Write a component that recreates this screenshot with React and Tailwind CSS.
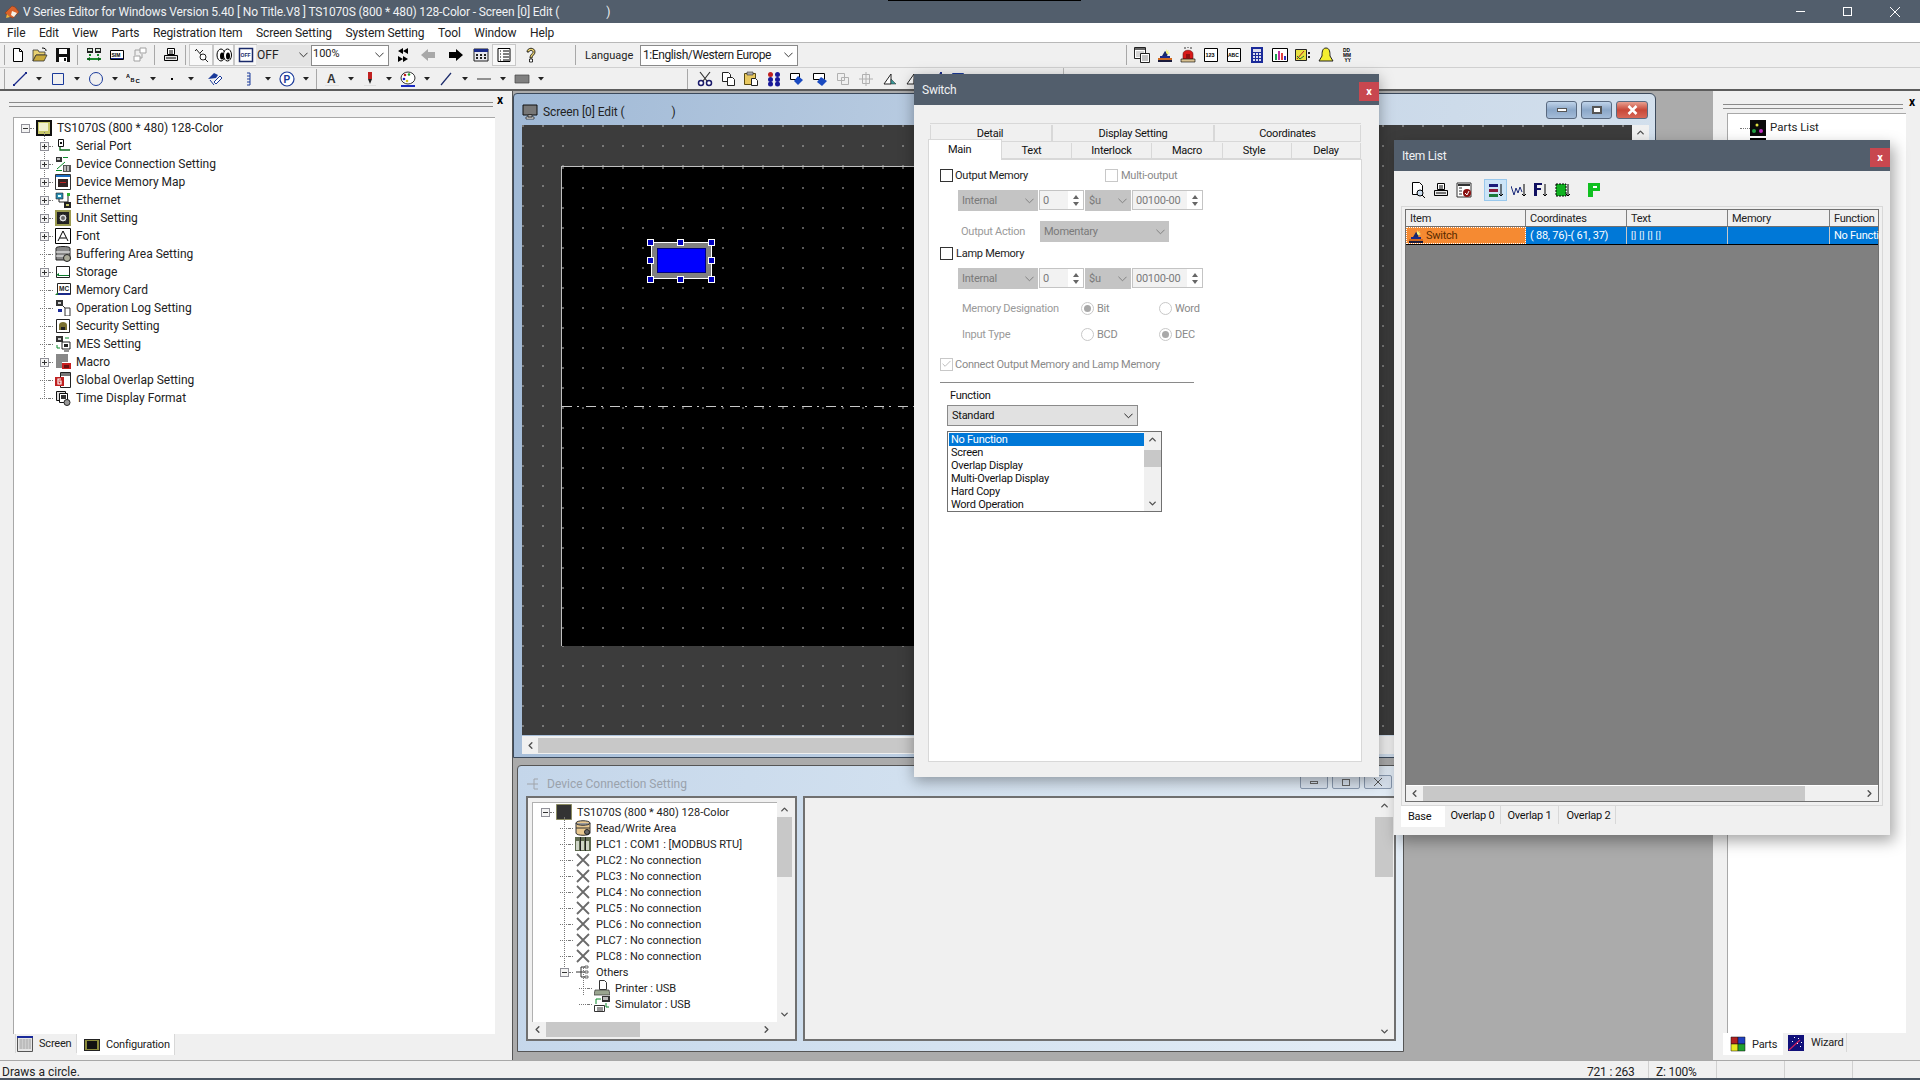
import React from 'react';
import { ChevronUp, ChevronDown, ChevronLeft, ChevronRight, Check } from 'lucide-react';

const S = ({ children }) => <svg viewBox="0 0 16 16" className="w-4 h-4 shrink-0">{children}</svg>;
const T = ({ x, y, s = 5, f = '#000', c }) => <text x={x} y={y} fontSize={s} fill={f} fontFamily="Liberation Sans" fontWeight="700">{c}</text>;

const I = {
  app: <S><path d="M1 9 8 2l3 1 4 5-6 6-3-1z" fill="#d9622b" stroke="#8a3a1a" strokeWidth=".6"/><path d="M8 7l5 2-3 4-3-2z" fill="#f3f0e6"/><path d="M3 10l3 3-4 1z" fill="#f0b23a"/></S>,
  new: <S><path d="M3.500 1.500h6l3 3v10h-9z" fill="#fff" stroke="#000"/><path d="M9.500 1.500v3h3" fill="none" stroke="#000"/></S>,
  open: <S><path d="M1 3h5l1 2h6v3H4l-3 6z" fill="#e8d070" stroke="#333" strokeWidth=".8"/><path d="M4 8h11l-3 6H1z" fill="#c9a93a" stroke="#333" strokeWidth=".8"/><path d="M10 1c3 0 4 1 4 3" stroke="#000" fill="none"/></S>,
  save: <S><path d="M1 1h14v14H1z" fill="#111"/><path d="M4 2h8v5H4z" fill="#fff"/><path d="M4 10h8v5H4z" fill="#fff"/><path d="M9 11h2v3H9z" fill="#111"/></S>,
  net: <S><path d="M1 1h6v5H1zM9 1h6v5H9z" fill="#222"/><path d="M2 2h4v2H2zM10 2h4v2h-4z" fill="#d8e8d8"/><path d="M3 7h2v2H3zM11 7h2v2h-2z" fill="#1a8a2a"/><path d="M1 11h14v2H1z" fill="#1a8a2a"/><path d="M1 12l3-2v4zM15 12l-3-2v4z" fill="#0a5a1a"/></S>,
  sim: <S><path d="M1.500 3.500h13v9h-13z" fill="#fff" stroke="#000"/><path d="M2 11h12v1H2z" fill="#1a2a8a"/><T x={2.500} y={9.500} s={5} c="SIM"/></S>,
  netg: <S><path d="M8 1h6v5H8zM2 9h6v5H2z" fill="#fff" stroke="#a0a0a0"/><path d="M3 3v5M3 3h5M10 7v4h-2" stroke="#a0a0a0" fill="none"/></S>,
  print: <S><path d="M4.500 1.500h7v6h-7z" fill="#fff" stroke="#000"/><path d="M1.500 8.500h13v5h-13z" fill="#e8e8e8" stroke="#000"/><path d="M6 4h4M6 6h4M3 11h10" stroke="#000"/></S>,
  plug: <S><path d="M3 2l6 7M10 3l-3 3" stroke="#222" fill="none"/><circle cx="10" cy="10" r="3" fill="#fff" stroke="#222"/><path d="M2 4l2-2" stroke="#222"/><path d="M12 12l3 3" stroke="#222"/></S>,
  eyes: <S><ellipse cx="5" cy="8" rx="4" ry="6" fill="#fff" stroke="#000"/><ellipse cx="11.500" cy="8" rx="4" ry="6" fill="#fff" stroke="#000"/><ellipse cx="6" cy="9" rx="2" ry="3.500" fill="#000"/><ellipse cx="12" cy="9" rx="2" ry="3.500" fill="#000"/></S>,
  off: <S><path d="M1.500 1.500h13v13h-13z" fill="#fff" stroke="#1a2a6a" strokeWidth="1.500"/><T x={2.600} y={10} s={5} f="#1a2a6a" c="OFF"/></S>,
  bk: <S><path d="M9 1v6L4 4zM14 1v6L9 4z M4 9l5 3-5 3zM9 9l5 3-5 3z" fill="#000"/></S>,
  lg: <S><path d="M1 8l7-6v3h7v6H8v3z" fill="#a8a8a8"/></S>,
  rg: <S><path d="M15 8L8 2v3H1v6h7v3z" fill="#000"/></S>,
  cal: <S><path d="M1 2h14v12H1z" fill="#e8e8ee" stroke="#222"/><path d="M1 2h14v3H1z" fill="#1a2a8a"/><path d="M3 7h2v2H3zM7 7h2v2H7zM11 7h2v2h-2zM3 10h2v2H3zM7 10h2v2H7zM11 10h2v2h-2z" fill="#222"/></S>,
  list: <S><path d="M2 1.500h12v13H2z" fill="#fff" stroke="#000"/><path d="M4 4h1M7 4h6M4 7h1M7 7h6M4 10h1M7 10h6M4 13h1M7 13h6" stroke="#000"/></S>,
  help: <S><path d="M4 5c0-5 8-5 8 0 0 3-3 3-3 6H7c0-4 3-4 3-6 0-2-4-2-4 0z" fill="#e8d070" stroke="#000" strokeWidth=".8"/><path d="M6.500 12h3v3h-3z" fill="#fff" stroke="#000" strokeWidth=".8"/></S>,
  line: <S><path d="M2 14L14 2" stroke="#1a2a8a" strokeWidth="1.300"/><path d="M1 13h2v2H1zM13 1h2v2h-2z" fill="#1a2a8a"/></S>,
  rect: <S><path d="M2.500 2.500h11v11h-11z" fill="none" stroke="#1a3a9a"/></S>,
  circle: <S><circle cx="8" cy="8" r="6.500" fill="none" stroke="#1a3a9a"/></S>,
  abc: <S><T x={0} y={7} s={5.500} c="A"/><T x={4.500} y={11} s={5.500} c="B"/><T x={9.500} y={12} s={6} c="C"/></S>,
  dot: <S><path d="M7 7h2v2H7z" fill="#000"/></S>,
  tag: <S><path d="M1 8l6-6 4 2-2 3z" fill="#1a3a9a"/><path d="M7 11l6-6 2 2-6 6z" fill="#fff" stroke="#1a3a9a"/><path d="M3 9l4 5" stroke="#1a3a9a"/></S>,
  brk: <S><path d="M6 2h3v12H6M6 5h3M6 8h3M6 11h3" fill="none" stroke="#1a3a9a"/></S>,
  p: <S><circle cx="8" cy="8" r="7" fill="#fff" stroke="#1a3a9a" strokeWidth="1.200"/><T x={4.500} y={12} s={10} f="#1a3a9a" c="P"/></S>,
  a: <S><T x={3} y={12} s={12} f="#333" c="A"/><path d="M1 14h14v1H1z" fill="#e0e0e0"/></S>,
  pen: <S><path d="M6 1h4v7H6z" fill="#c02020"/><path d="M6 8h4l-2 5z" fill="#222"/><path d="M2 14h12v1H2z" fill="#e0e0e0"/></S>,
  pal: <S><ellipse cx="8" cy="7" rx="7" ry="6" fill="#fff" stroke="#333"/><circle cx="5" cy="4" r="1.300" fill="#c02020"/><circle cx="9" cy="3.500" r="1.300" fill="#20a020"/><circle cx="4" cy="8" r="1.300" fill="#2020c0"/><circle cx="7" cy="10" r="1.300" fill="#d0c020"/><path d="M1 14h14v2H1z" fill="#1a2ac0"/></S>,
  slash: <S><path d="M3 14L13 2" stroke="#1a2a6a" strokeWidth="1.200"/></S>,
  dash: <S><path d="M1 8h14" stroke="#333"/></S>,
  gbox: <S><path d="M1 4h14v8H1z" fill="#808080" stroke="#444" strokeWidth=".7"/></S>,
  cut: <S><circle cx="4" cy="12" r="2.500" fill="#fff" stroke="#1a1a6a" strokeWidth="1.500"/><circle cx="12" cy="12" r="2.500" fill="#fff" stroke="#1a1a6a" strokeWidth="1.500"/><path d="M3 1l7 9M13 1L6 10" stroke="#333" strokeWidth="1.200"/></S>,
  copy: <S><path d="M2.500 1.500h6l2 2v7h-8z" fill="#fff" stroke="#222"/><path d="M7.500 6.500h5l2 2v6h-7z" fill="#fff" stroke="#222"/></S>,
  paste: <S><path d="M1.500 2.500h11v11h-11z" fill="#e8c860" stroke="#5a4a10"/><path d="M4 1h6v3H4z" fill="#aaa" stroke="#333" strokeWidth=".6"/><path d="M8.500 7.500h4l2 2v5h-6z" fill="#fff" stroke="#222"/></S>,
  dots: <S><circle cx="4.500" cy="3.500" r="2.500" fill="#c02020"/><circle cx="11.500" cy="3.500" r="2.500" fill="#1a1a9a"/><circle cx="4.500" cy="8.500" r="2.500" fill="#1a1a9a"/><circle cx="11.500" cy="8.500" r="2.500" fill="#1a1a9a"/><circle cx="4.500" cy="13" r="2.500" fill="#1a1a9a"/><circle cx="11.500" cy="13" r="2.500" fill="#1a1a9a"/></S>,
  up: <S><path d="M1.500 2.500h9v6h-9z" fill="#fff" stroke="#000"/><path d="M9 5l5 4-5 5-4-4z" fill="#1a4ac0"/></S>,
  dn: <S><path d="M1.500 2.500h11v6h-11z" fill="#fff" stroke="#000"/><path d="M9 6l6 4-5 5-5-4z" fill="#1a4ac0"/></S>,
  g1: <S><path d="M2.500 2.500h7v7h-7zM6.500 6.500h7v7h-7z" fill="none" stroke="#b0b0b0"/></S>,
  g2: <S><path d="M4.500 3.500h7v9h-7zM1 8h14M8 1v14" fill="none" stroke="#b0b0b0"/></S>,
  tri1: <S><path d="M3 13L10 3v10z" fill="#fff" stroke="#222"/><path d="M10 8l5 5h-5z" fill="#3a9a9a" stroke="#222" strokeWidth=".5"/></S>,
  win: <S><path d="M.500 .500h11v11H.500z" fill="#fff" stroke="#222"/><path d="M1 1h10v2H1z" fill="#666"/><path d="M2 5h8M2 7h8M2 9h8" stroke="#aaa"/><path d="M6.500 6.500h9v9h-9z" fill="#fff" stroke="#222"/><path d="M8 9h6M8 11h6M8 13h6" stroke="#888"/></S>,
  bell: <S><path d="M8 1c-4 0-4 5-4 8l-3 5h14l-3-5c0-3 0-8-4-8z" fill="#f4ee30" stroke="#222"/></S>,
  switch: <S><path d="M5 9l3-5 3 3-1 2z" fill="#1a2a6a"/><path d="M9 2l1 2 2-1-1 2 2 1-2 1 0 1-2-2z" fill="#f0f080"/><path d="M3 9h10v2H3z" fill="#1a2a8a"/><path d="M1 11h14v2H1z" fill="#d06a20"/><path d="M1 13h14v2H1z" fill="#1a1a3a"/></S>,
  alarm: <S><path d="M3 7c0-5 10-5 10 0v5H3z" fill="#d81818" stroke="#622" strokeWidth=".6"/><path d="M6 7h4v4H6z" fill="#901010"/><path d="M1 12h14v3H1z" fill="#d8c090" stroke="#000" strokeWidth=".6"/><path d="M5 0v2M11 0v2M8 0v1" stroke="#333"/></S>,
  n123: <S><path d="M1.500 1.500h13v13h-13z" fill="#fff" stroke="#000"/><T x={2.500} y={10} s={5.500} c="123"/></S>,
  nabc: <S><path d="M1.500 1.500h13v13h-13z" fill="#fff" stroke="#000"/><T x={2} y={10} s={5} c="ABC"/></S>,
  calc: <S><path d="M2 0h12v16H2z" fill="#1a2a9a"/><path d="M4 2h8v3H4zM4 6h2v2H4zM7 6h2v2H7zM10 6h2v2h-2zM4 9h2v2H4zM7 9h2v2H7zM10 9h2v2h-2zM4 12h2v2H4zM7 12h2v2H7zM10 12h2v2h-2z" fill="#dde"/></S>,
  chart: <S><path d="M.500 1.500h15v13H.500z" fill="#fff" stroke="#000"/><path d="M3 7h2v6H3z" fill="#20a050"/><path d="M6 4h2v9H6z" fill="#c030a0"/><path d="M9 6h2v7H9z" fill="#e04040"/><path d="M12 9h2v4h-2z" fill="#3030c0"/></S>,
  meter: <S><path d="M.500 2.500h11v11H.500z" fill="#e8e040" stroke="#222"/><path d="M2 12l7-8" stroke="#b02020"/><path d="M2 9l3 3 4-3" stroke="#207030" fill="none"/><path d="M13 5h2v2h-2zM13 9h2v2h-2z" fill="#222"/></S>,
  dmy: <S><T x={2} y={4.800} s={4.800} c="DD"/><T x={2} y={10} s={4.800} c="MM"/><T x={3.500} y={15.200} s={4.800} c="YY"/></S>,
  root: <S><path d="M0 0h16v16H0z" fill="#111"/><path d="M2 2h12v12H2z" fill="#c8c86a"/><path d="M3 3h9v8H3z" fill="#f0f0d0"/></S>,
  serial: <S><path d="M3.500 1.500h5v7h-5z" fill="#fff" stroke="#111"/><path d="M5 4h2v2H5z" fill="#111"/><path d="M5 9v3h10" stroke="#0a6a1a" fill="none" strokeWidth="1.300"/></S>,
  dev: <S><path d="M1 1h6v5H1z" fill="#333"/><path d="M2 2h3v2H2z" fill="#bbb"/><path d="M2 13l8-7" stroke="#0a8a2a"/><path d="M8 1h5v1H8zM1 14h6v1H1z" fill="#0a8a2a"/><path d="M8 9h8v7H8z" fill="#555"/><path d="M9 10h2v5H9zM12 10h2v5h-2z" fill="#bbb"/></S>,
  map: <S><path d="M.500 .500h15v15H.500z" fill="#fff" stroke="#333"/><path d="M1 1h14v2H1z" fill="#1a6ac0"/><path d="M3 5h10v8H3z" fill="#322"/><path d="M5 8h6v1H5z" fill="#c02020"/></S>,
  eth: <S><path d="M1 1h7v6H1z" fill="#2a8ab0" stroke="#222" strokeWidth=".6"/><path d="M3 3h3v2H3z" fill="#dff"/><path d="M4 7v3h9V3" stroke="#222" fill="none"/><path d="M12 1h3v3h-3z" fill="#30b030"/><path d="M9 10h7v6H9z" fill="#222"/><path d="M11 12h3v2h-3z" fill="#c8c86a"/></S>,
  unit: <S><path d="M0 0h16v16H0z" fill="#9a9a50"/><path d="M2 2h12v12H2z" fill="#222"/><circle cx="8" cy="8" r="4" fill="#ddd" stroke="#222"/><circle cx="8" cy="8" r="2" fill="#666"/></S>,
  font: <S><path d="M.500 .500h15v15H.500z" fill="#fff" stroke="#000"/><path d="M3 13L8 3l5 10M5 10h6" fill="none" stroke="#000"/></S>,
  buf: <S><path d="M1 2c0-2 14-2 14 0v12H1z" fill="#888" stroke="#222"/><path d="M1 6h14M1 10h14" stroke="#fff"/><circle cx="12" cy="12" r="3.500" fill="#aa9" stroke="#222"/></S>,
  storage: <S><path d="M1.500 2.500h13v11h-13z" fill="#fff" stroke="#222"/><path d="M3 11h11v1H3z" fill="#0a7a2a"/><path d="M1 11l3-2v3z" fill="#0a7a2a"/></S>,
  mc: <S><path d="M2.500 1.500h13v11h-13z" fill="#fff" stroke="#222"/><T x={4} y={8.500} s={6.500} f="#222" c="MC"/><path d="M3 11h12v2H3z" fill="#1a2a8a"/><path d="M0 13l3-3v3z" fill="#1a7a2a"/></S>,
  oplog: <S><path d="M1 0h7v6H1z" fill="#333"/><path d="M3 2h3v2H3z" fill="#ccc"/><path d="M3 9h4v3H3z" fill="#1a2a9a"/><path d="M10 8h5v8h-5z" fill="#fff" stroke="#333"/><path d="M8 6l2 2" stroke="#333"/></S>,
  sec: <S><path d="M1.500 1.500h13v13h-13z" fill="#fff" stroke="#222"/><path d="M4 12V7c0-4 8-4 8 0v5z" fill="#7a7030"/><path d="M6 9h4v3H6z" fill="#222"/></S>,
  mes: <S><path d="M1 0h7v6H1z" fill="#333"/><path d="M3 2h3v2H3z" fill="#ccc"/><path d="M7 6h8v7H7z" fill="#fff" stroke="#222"/><path d="M9 8h4v3H9z" fill="#222"/><path d="M9 15h5" stroke="#222"/><path d="M2 9v3h3" stroke="#0a8a2a" fill="none"/><path d="M10 2h4" stroke="#0a8a2a"/></S>,
  macro: <S><path d="M1 1h12M1 3h12M1 5h12M1 7h12M1 9h6M1 11h6M1 13h6" stroke="#111"/><path d="M7 9h9v6H7z" fill="#c81f1f"/><path d="M9 11h5v3H9z" fill="#6a1010"/></S>,
  gov: <S><path d="M5.500 .500h10v15h-10z" fill="#fff" stroke="#222"/><path d="M6 1h9v3H6z" fill="#777"/><path d="M0 5h9v9H0z" fill="#c02020"/><path d="M6 7H3v5h3V9H4" fill="none" stroke="#fff" strokeWidth="1.200"/></S>,
  time: <S><path d="M1.500 1.500h9v9h-9z" fill="#ddd" stroke="#111"/><path d="M4.500 3.500h8v9h-8z" fill="#fff" stroke="#111"/><path d="M6 5h5v4H6z" fill="#333"/><circle cx="12" cy="12.500" r="3" fill="#999" stroke="#222"/></S>,
  rw: <S><path d="M1 3c0-3 14-3 14 0v10c0 3-14 3-14 0z" fill="#e8c890" stroke="#333"/><path d="M1 3c0 3 14 3 14 0" fill="#999" stroke="#333"/><path d="M1 8h14" stroke="#333"/><circle cx="12" cy="12" r="2.500" fill="#666" stroke="#222"/></S>,
  plc: <S><path d="M0 1h16v14H0z" fill="#5f6b50"/><path d="M1 5h3v9H1zM6 5h3v9H6zM11 5h3v9h-3z" fill="#d0d6c8"/><path d="M5 1h1v14H5zM10 1h1v14h-1z" fill="#222"/></S>,
  no: <S><path d="M2 2l12 12M14 2L2 14" stroke="#6a6a6a" strokeWidth="1.800"/></S>,
  oth: <S><path d="M1 8h5M6 8V3h4M6 8h4M6 8v5h4" stroke="#333" fill="none"/><path d="M10 2h3v2h-3zM10 7h3v2h-3zM10 12h3v2h-3z" fill="#fff" stroke="#333" strokeWidth=".7"/></S>,
  prn: <S><path d="M5.500 .500h5l2 2v7h-7z" fill="#fff" stroke="#333"/><path d="M1 10h14l1 5H0z" fill="#9aa590" stroke="#333" strokeWidth=".7"/></S>,
  simu: <S><path d="M8 0h8v6H8z" fill="#333"/><path d="M9 1h5v3H9z" fill="#bbb"/><path d="M.500 9.500h10v6H.500z" fill="#fff" stroke="#333"/><path d="M3 12h6M3 14h6" stroke="#333"/><path d="M2 8V3h5M12 7v4h3" stroke="#0a8a2a" fill="none"/></S>,
  mon: <S><path d="M1 1h14v10H1z" fill="#777" stroke="#111"/><path d="M6 11h4v2H6zM4 13h8v2H4z" fill="#fff" stroke="#111" strokeWidth=".7"/></S>,
  droot: <S><path d="M.500 .500h15v15H.500z" fill="#333" stroke="#8a8a60"/></S>,
  scr: <S><path d="M.500 .500h15v15H.500z" fill="#e6e6e6" stroke="#555"/><path d="M0 0h16v2H0z" fill="#1a2a9a"/><path d="M2 4h12M2 6h12M2 8h12M2 10h12M2 12h12M4 3v10M7 3v10M10 3v10M13 3v10" stroke="#999" strokeWidth=".6"/></S>,
  cfg: <S><path d="M0 2h16v12H0z" fill="#222"/><path d="M1 3h14v10H1z" fill="#8a8a3a"/><path d="M3 4h10v8H3z" fill="#111"/></S>,
  parts: <S><path d="M1 1h7v7H1z" fill="#b02020" stroke="#111" strokeWidth=".5"/><path d="M8 1h7v7H8z" fill="#2040c0" stroke="#111" strokeWidth=".5"/><path d="M1 8h7v7H1z" fill="#e8e820" stroke="#111" strokeWidth=".5"/><path d="M8 8h7v7H8z" fill="#20a030" stroke="#111" strokeWidth=".5"/></S>,
  wiz: <S><path d="M0 0h16v16H0z" fill="#10107a"/><path d="M1 15L12 5" stroke="#d02060" strokeWidth="1.200"/><path d="M6 2h1v1H6zM10 3h1v1h-1zM13 7h1v1h-1zM9 8h1v1H9zM12 11h1v1h-1zM4 6h1v1H4z" fill="#fff"/></S>,
  plist: <S><path d="M0 0h16v16H0z" fill="#0a0a0a"/><circle cx="7" cy="5" r="1.500" fill="#e0e040"/><circle cx="4" cy="11" r="2" fill="#20a040"/><circle cx="11" cy="11" r="2" fill="#c030c0"/></S>,
  doc: <S><path d="M2.500 .500h7l3 3v9h-10z" fill="#fff" stroke="#000"/><circle cx="10" cy="11" r="3" fill="#cde" stroke="#000"/><path d="M12 13l3 3" stroke="#000"/></S>,
  chk: <S><path d="M1 1h14v14H1z" fill="#fff" stroke="#333"/><path d="M2 2h12v2H2z" fill="#333"/><path d="M3 6h3M3 9h3M3 12h3" stroke="#333"/><circle cx="11" cy="11" r="4" fill="#8a1010"/><path d="M9 11l2 2 2-4" stroke="#fff" fill="none"/></S>,
  sort: <S><path d="M1 2h9v3H1z" fill="#1a1a7a"/><path d="M1 7h9v3H1z" fill="#8a1a3a"/><path d="M1 12h9v3H1z" fill="#1a7a3a"/><path d="M13 2v12M11 12l2 2 2-2" fill="none" stroke="#000"/></S>,
  wave: <S><path d="M0 4l3 9 2-7 2 5 2-6 2 5" fill="none" stroke="#1a2a7a"/><path d="M13 2v12M11 12l2 2 2-2" fill="none" stroke="#000"/></S>,
  fs: <S><path d="M1 1h8v2H4v3h4v2H4v6H1z" fill="#101060"/><path d="M12 2v12M10 12l2 2 2-2" fill="none" stroke="#000"/></S>,
  gs: <S><path d="M1 2h10v12H1z" fill="#10b020" stroke="#000" strokeDasharray="2 1"/><path d="M13 2v12M11 12l2 2 2-2" fill="none" stroke="#000"/></S>,
  pg: <S><path d="M2 1h12v8H7v6H2z" fill="#10c020"/><path d="M7 4h4v2H7z" fill="#fff"/></S>,
};

const Tri = () => <svg viewBox="0 0 6 4" className="w-[6px] h-[4px] shrink-0"><path d="M0 0h6L3 3.500z" fill="#222" /></svg>;
const Chev = () => <svg viewBox="0 0 10 6" className="w-[9px] h-[6px] shrink-0"><path d="M.5.500 5 5 9.500.500" fill="none" stroke="currentColor" /></svg>;
const Sep = () => <div className="w-[7px] h-[20px] flex justify-center shrink-0"><div className="w-px h-full bg-[#a8a8a8]" /></div>;
const Slot = ({ i, w = 'w-[23px]', on }) => (
  <div className={`${w} h-[22px] flex items-center justify-center shrink-0 ${on ? 'bg-[#f8f8f8] border border-[#c8c8c8]' : ''}`}>{i}</div>
);
const Drop = ({ i, gap }) => (
  <div className={`flex items-center shrink-0 ${gap || ''}`}>
    <div className="w-[24px] flex justify-center">{i}</div>
    <div className="w-[14px] flex justify-center"><Tri /></div>
  </div>
);

const Expander = ({ sign }) => (
  <div className="relative w-[9px] h-[9px] bg-[#f4f4f4] border border-[#909098] shrink-0 flex items-center justify-center">
    <div className="w-[5px] h-px bg-[#333]" />
    {sign === '+' && <div className="absolute w-px h-[5px] bg-[#333]" />}
  </div>
);
const Row = ({ ml, h, exp, icon, text }) => (
  <div className={`flex items-center ${h} ${ml}`}>
    {exp ? <Expander sign={exp} /> : <div className="w-[9px] border-t border-dotted border-[#777]" />}
    <div className="w-[4px] border-t border-dotted border-[#777]" />
    <div className="w-[2px]" />
    {icon}
    <span className="ml-[5px] whitespace-nowrap">{text}</span>
  </div>
);

const tree = [
  ['+', I.serial, 'Serial Port'], ['+', I.dev, 'Device Connection Setting'], ['+', I.map, 'Device Memory Map'],
  ['+', I.eth, 'Ethernet'], ['+', I.unit, 'Unit Setting'], ['+', I.font, 'Font'], ['', I.buf, 'Buffering Area Setting'],
  ['+', I.storage, 'Storage'], ['', I.mc, 'Memory Card'], ['', I.oplog, 'Operation Log Setting'], ['', I.sec, 'Security Setting'],
  ['', I.mes, 'MES Setting'], ['+', I.macro, 'Macro'], ['', I.gov, 'Global Overlap Setting'], ['', I.time, 'Time Display Format'],
];

const VBar = ({ cls, thumb }) => (
  <div className={`flex flex-col items-center justify-between bg-[#f0f0f0] ${cls}`}>
    <div className="h-[15px] flex items-center"><ChevronUp className="w-[11px] h-[11px] text-[#505050]" strokeWidth={3} /></div>
    <div className="flex-1 w-full">{thumb}</div>
    <div className="h-[15px] flex items-center"><ChevronDown className="w-[11px] h-[11px] text-[#505050]" strokeWidth={3} /></div>
  </div>
);

const Panel = ({ cls, children }) => <div className={`flex flex-col bg-[#f0f0f0] ${cls}`}>{children}</div>;
const Grip = ({ ml, w, gap }) => (
  <div className="flex items-center h-[26px] shrink-0">
    <div className={`${ml} ${w} h-[5px] border-t border-b border-[#8a8a8a]`} />
    <span className={`${gap} -mt-[8px] text-[12px] font-bold text-black`}>x</span>
  </div>
);

const DSelect = ({ w, t, dark }) => (
  <div className={`${w} h-[21px] flex items-center justify-between px-[4px] shrink-0 ${dark ? 'bg-[#e1e1e1] border border-[#8a8a8a] text-[#111]' : 'bg-[#c4c4c4] text-[#7a7a7a]'}`}>
    <span>{t}</span><Chev />
  </div>
);
const Spin = ({ w, t }) => (
  <div className={`${w} h-[20px] flex items-center bg-[#f2f2f2] border border-[#c4c4c4] text-[#7a7a7a] pl-[3px] shrink-0`}>
    <span className="flex-1">{t}</span>
    <div className="w-[15px] h-full flex flex-col items-center justify-center gap-[3px] bg-white">
      <svg viewBox="0 0 6 4" className="w-[6px] h-[4px]"><path d="M3 0l3 4H0z" fill="#666" /></svg>
      <svg viewBox="0 0 6 4" className="w-[6px] h-[4px]"><path d="M0 0h6L3 4z" fill="#666" /></svg>
    </div>
  </div>
);
const MemRow = ({ mt }) => (
  <div className={`flex items-start ml-[18px] gap-[1px] ${mt}`}>
    <DSelect w="w-[80px]" t="Internal" /><Spin w="w-[45px]" t="0" /><DSelect w="w-[46px]" t="$u" /><Spin w="w-[71px]" t="00100-00" />
  </div>
);
const CB = ({ checked, disabled }) => (
  <div className={`w-[13px] h-[13px] bg-white border flex items-center justify-center shrink-0 ${disabled ? 'border-[#c8c8c8]' : 'border-[#333]'}`}>
    {checked && <Check className="w-[12px] h-[12px] text-[#a0a0a0]" strokeWidth={1.5} />}
  </div>
);
const Radio = ({ on }) => (
  <div className="w-[13px] h-[13px] rounded-full bg-white border border-[#c8c8c8] flex items-center justify-center shrink-0">
    {on && <div className="w-[7px] h-[7px] rounded-full bg-[#a8a8a8]" />}
  </div>
);
const RadRow = ({ mt, label, a, b, aOn }) => (
  <div className={`flex items-center h-[16px] ml-[22px] text-[#9a9a9a] ${mt}`}>
    <span className="w-[119px]">{label}</span>
    <div className="w-[78px] flex items-center gap-[3px] text-[#8a8a8a]"><Radio on={aOn} /><span>{a}</span></div>
    <div className="flex items-center gap-[3px] text-[#8a8a8a]"><Radio on={!aOn} /><span>{b}</span></div>
  </div>
);

const Win = ({ t, w }) => <span className={`flex items-center justify-center ${w} h-full`}>{t}</span>;
const AeroBtn = ({ w, cls, children }) => (
  <div className={`${w} h-[18px] rounded-[3px] border border-[#5a6a80] flex items-center justify-center ${cls}`}>{children}</div>
);
const Flat = ({ children }) => <div className="w-[28px] h-[14px] border border-[#8a9ab0] rounded-[2px] bg-[#d8e2ee] flex items-center justify-center">{children}</div>;
const Cell = ({ w, t, cls }) => <div className={`${w} h-full flex items-center pl-[4px] border-r border-[#808080] shrink-0 overflow-hidden whitespace-nowrap ${cls || ''}`}>{t}</div>;

export default function App() {
  return (
    <div className="relative w-[1920px] h-[1080px] overflow-hidden flex flex-col bg-[#f0f0f0] text-[12px] leading-none text-[#222] font-[Roboto,sans-serif]">
      <div className="absolute left-[888px] top-0 w-[193px] h-px bg-black" />

      {/* title bar */}
      <div className="h-[23px] bg-[#525e6c] flex items-center text-[#f0f2f4] shrink-0">
        <div className="ml-[4px] mr-[3px]">{I.app}</div>
        <span className="whitespace-nowrap tracking-[-0.16px]">V Series Editor for Windows Version 5.40 [ No Title.V8 ] TS1070S (800 * 480) 128-Color - Screen [0] Edit (</span>
        <span className="ml-[47px]">)</span>
        <div className="ml-auto flex items-center text-white">
          <Win w="w-[47px]" t={<div className="w-[9px] h-px bg-white" />} />
          <Win w="w-[47px]" t={<div className="w-[9px] h-[9px] border border-white" />} />
          <Win w="w-[47px]" t={<svg viewBox="0 0 10 10" className="w-[10px] h-[10px]"><path d="M0 0l10 10M10 0L0 10" stroke="#fff" /></svg>} />
          <div className="w-[2px]" />
        </div>
      </div>

      {/* menu */}
      <div className="h-[19px] bg-white flex items-center gap-[13.5px] pl-[7px] shrink-0 tracking-[-0.1px]">
        {['File', 'Edit', 'View', 'Parts', 'Registration Item', 'Screen Setting', 'System Setting', 'Tool', 'Window', 'Help'].map(m => <span key={m}>{m}</span>)}
      </div>

      {/* toolbars */}
      <div className="h-[49px] shrink-0 border-t border-[#b8b8b8] border-b-2 border-b-[#5c5c5c] flex flex-col">
        <div className="h-[25px] flex items-center pl-[1px]">
          <Sep /><Slot i={I.new} w="w-[20px]" /><Slot i={I.open} /><Slot i={I.save} /><Sep />
          <div className="w-[1px]" /><Slot i={I.net} /><Slot i={I.sim} /><Slot i={I.netg} /><Sep />
          <div className="w-[1px]" /><Slot i={I.print} /><Sep />
          <Slot i={I.plug} w="w-[24px]" on /><Slot i={I.eyes} w="w-[21px]" on /><Slot i={I.off} w="w-[23px]" on />
          <div className="w-[56px] h-[21px] bg-[#e4e4e4] flex items-center justify-between pl-[1px] pr-[4px] -ml-[1px]"><span>OFF</span><Chev /></div>
          <div className="w-[78px] h-[21px] bg-white border border-[#8a8a8a] flex items-center justify-between pl-[1px] pr-[4px] -ml-[1px]"><span className="-mt-[4px] text-[11px]">100%</span><Chev /></div>
          <Slot i={I.bk} w="w-[26px]" /><Slot i={I.lg} w="w-[26px]" /><div className="w-[2px]" /><Slot i={I.rg} w="w-[26px]" /><Slot i={I.cal} /><Slot i={I.list} w="w-[24px]" on /><Slot i={I.help} w="w-[30px]" />
          <div className="w-[26px]" /><Sep />
          <span className="ml-[6px] w-[47px] text-[11px]">Language</span>
          <div className="ml-[8px] w-[158px] h-[21px] bg-white border border-[#8a8a8a] flex items-center justify-between pl-[2px] pr-[4px]"><span className="whitespace-nowrap tracking-[-0.4px]">1:English/Western Europe</span><Chev /></div>
          <div className="ml-[325px]"><Sep /></div>
          <Slot i={I.win} /><Slot i={I.switch} /><Slot i={I.alarm} /><Slot i={I.n123} /><Slot i={I.nabc} /><Slot i={I.calc} /><Slot i={I.chart} /><Slot i={I.meter} /><Slot i={I.bell} /><Slot i={I.dmy} />
        </div>
        <div className="h-[22px] flex items-center border-t border-[#d0d0d0]">
          <div className="w-[1px]" /><Sep />
          <Drop i={I.line} /><Drop i={I.rect} /><Drop i={I.circle} /><Drop i={I.abc} /><Drop i={I.dot} />
          <div className="ml-[5px] w-[24px] flex justify-center">{I.tag}</div>
          <Drop i={I.brk} gap="ml-[10px]" /><Drop i={I.p} />
          <Sep />
          <Drop i={I.a} /><Drop i={I.pen} /><Drop i={I.pal} /><Drop i={I.slash} /><Drop i={I.dash} /><Drop i={I.gbox} />
          <div className="ml-[136px]"><Sep /></div>
          <div className="w-[2px]" />
          <Slot i={I.cut} /><Slot i={I.copy} /><Slot i={I.paste} /><Slot i={I.dots} /><Slot i={I.up} /><Slot i={I.dn} /><Slot i={I.g1} /><Slot i={I.g2} /><Slot i={I.tri1} /><Slot i={I.tri1} /><Slot i={I.line} /><Slot i={I.rect} /><Slot i={I.dash} /><Slot i={I.dash} /><Slot i={I.gbox} /><Slot i={I.gbox} />
          <div className="ml-[2px] w-px h-[21px] bg-[#b8b8b8]" />
        </div>
      </div>

      {/* work area */}
      <div className="flex flex-1 min-h-0">
        <Panel cls="w-[512px] shrink-0">
          <Grip ml="ml-[9px]" w="w-[484px]" gap="ml-[4px]" />
          <div className="relative ml-[13px] w-[482px] h-[917px] bg-white border-l border-t border-[#a8a8a8] pt-[1px]">
            <div className="absolute left-[30px] top-[14px] h-[267px] border-l border-dotted border-[#777]" />
            <Row ml="ml-[7px]" h="h-[18px]" exp="-" icon={I.root} text="TS1070S (800 * 480) 128-Color" />
            {tree.map(([e, ic, t]) => <Row key={t} ml="ml-[26px]" h="h-[18px]" exp={e} icon={ic} text={t} />)}
          </div>
          <div className="flex ml-[15px] h-[22px] text-[11px] tracking-[-0.2px]">
            <div className="w-[62px] h-[19px] flex items-center gap-[6px] pl-[1px] border-x border-[#d8d8d8]">{I.scr}<span>Screen</span></div>
            <div className="w-[98px] h-[21px] flex items-center gap-[6px] pl-[7px] bg-white border-r border-[#d8d8d8]">{I.cfg}<span>Configuration</span></div>
          </div>
        </Panel>

        <div className="relative w-[1201px] shrink-0 bg-[#ababab] border-l border-[#555]">
          {/* screen edit window */}
          <div className="absolute left-0 top-[2px] w-[1143px] h-[665px] flex flex-col rounded-tl-[4px] rounded-tr-[6px] border border-[#3c4a5c] bg-[linear-gradient(100deg,#a0b9d6,#c4d4e6_50%,#d6e2ee)]">
            <div className="h-[31px] flex items-center pl-[8px] pt-[5px] shrink-0 text-[#222] tracking-[-0.1px]">
              {I.mon}<span className="ml-[5px]">Screen [0] Edit (</span><span className="ml-[47px]">)</span>
              <div className="ml-auto mr-[7px] flex gap-[4px] -mt-[4px]">
                <AeroBtn w="w-[31px]" cls="bg-[linear-gradient(#c0d4ea,#8ba7c8_50%,#a4bcd8)]"><div className="w-[10px] h-[4px] bg-white border border-[#555]" /></AeroBtn>
                <AeroBtn w="w-[31px]" cls="bg-[linear-gradient(#c0d4ea,#8ba7c8_50%,#a4bcd8)]"><div className="w-[10px] h-[8px] bg-white border-2 border-[#555]" /></AeroBtn>
                <AeroBtn w="w-[32px]" cls="bg-[linear-gradient(#e8a090,#c84838_50%,#d86858)]"><svg viewBox="0 0 10 10" className="w-[11px] h-[10px]"><path d="M1 1l8 8M9 1L1 9" stroke="#fff" strokeWidth="2.500" /></svg></AeroBtn>
              </div>
            </div>
            <div className="flex flex-1 min-h-0 ml-[8px] mr-[6px] mb-[3px]">
              <div className="flex-1 flex flex-col min-w-0">
                <div className="relative flex-1 bg-[#3c3c3c] bg-[radial-gradient(circle_at_1px_1px,#9a9a9a_0.6px,transparent_0.9px)] bg-[length:20px_20px] pt-[41px] pl-[39px]">
                  <div className="relative w-[800px] h-[480px] bg-black bg-[radial-gradient(circle_at_1px_1px,#8c8c8c_0.6px,transparent_0.9px)] bg-[length:20px_20px] border-l border-t border-[#c0c0c0]">
                    <div className="absolute left-0 top-[239px] w-full h-px bg-[repeating-linear-gradient(90deg,#c8c8c8_0,#c8c8c8_10px,transparent_10px,transparent_15px,#c8c8c8_15px,#c8c8c8_17px,transparent_17px,transparent_24px)]" />
                    <div className="absolute left-[85px] top-[72px] w-[68px] h-[44px]">
                      <div className="absolute left-[4px] top-[3px] w-[61px] h-[37px] bg-[#808080] border border-white p-[5px]">
                        <div className="w-full h-full bg-[#0000ff] border border-[#000080]" />
                      </div>
                      {['left-0 top-0', 'left-[30px] top-0', 'left-[61px] top-0', 'left-0 top-[18px]', 'left-[61px] top-[18px]', 'left-0 top-[37px]', 'left-[30px] top-[37px]', 'left-[61px] top-[37px]'].map(p => (
                        <div key={p} className={`absolute ${p} w-[7px] h-[7px] bg-[#0000c0] border border-white`} />
                      ))}
                    </div>
                  </div>
                </div>
                <div className="h-[18px] flex items-center bg-[#f0f0f0] mt-[1px] px-[3px]">
                  <ChevronLeft className="w-[11px] h-[11px] text-[#505050]" strokeWidth={3} />
                  <div className="ml-[2px] w-[840px] h-[15px] bg-[#c8c8c8]" />
                </div>
              </div>
              <VBar cls="w-[17px] shrink-0" />
            </div>
          </div>

          {/* device connection window */}
          <div className="absolute left-[4px] top-[674px] w-[887px] h-[287px] flex flex-col rounded-tl-[4px] border border-[#555] bg-[linear-gradient(100deg,#c4d6ea,#d4e2f0_50%,#e4edf6)]">
            <div className="h-[30px] flex items-center pl-[9px] pt-[5px] shrink-0 text-[#9aa2ac]">
              <svg viewBox="0 0 16 16" className="w-[16px] h-[16px]"><path d="M0 8h4M7 8h-3M7 8V3h4M7 8h4M7 8v5h4" stroke="#a0a4aa" fill="none" /></svg>
              <span className="ml-[4px] whitespace-nowrap">Device Connection Setting</span>
              <div className="ml-auto mr-[11px] flex gap-[4px] -mt-[3px]"><Flat><div className="w-[8px] h-[3px] border border-[#666]" /></Flat><Flat><div className="w-[8px] h-[7px] border border-[#666]" /></Flat><Flat><svg viewBox="0 0 8 8" className="w-[8px] h-[8px]"><path d="M0 0l8 8M8 0L0 8" stroke="#555" /></svg></Flat></div>
            </div>
            <div className="flex flex-1 min-h-0 ml-[8px] mr-[7px] mb-[10px] gap-[6px]">
              <div className="w-[271px] border-2 border-[#707070] bg-[#f0f0f0] flex flex-col shrink-0 text-[11px]">
                <div className="flex flex-1 min-h-0">
                  <div className="relative flex-1 bg-white ml-[4px] mt-[4px] border-t border-l border-[#b0b0b0] pt-[1px]">
                    <div className="absolute left-[31px] top-[14px] h-[150px] border-l border-dotted border-[#777]" />
                    <div className="absolute left-[50px] top-[164px] h-[28px] border-l border-dotted border-[#777]" />
                    <Row ml="ml-[8px]" h="h-[16px]" exp="-" icon={I.droot} text="TS1070S (800 * 480) 128-Color" />
                    {[[I.rw, 'Read/Write Area'], [I.plc, 'PLC1 : COM1 : [MODBUS RTU]'], ...[2, 3, 4, 5, 6, 7, 8].map(n => [I.no, `PLC${n} : No connection`])].map(([ic, t]) => (
                      <Row key={t} ml="ml-[27px]" h="h-[16px]" icon={ic} text={t} />
                    ))}
                    <Row ml="ml-[27px]" h="h-[16px]" exp="-" icon={I.oth} text="Others" />
                    <Row ml="ml-[46px]" h="h-[16px]" icon={I.prn} text="Printer : USB" />
                    <Row ml="ml-[46px]" h="h-[16px]" icon={I.simu} text="Simulator : USB" />
                  </div>
                  <VBar cls="w-[15px] shrink-0 mt-[4px] mr-[3px]" thumb={<div className="w-full h-[60px] bg-[#c8c8c8]" />} />
                </div>
                <div className="h-[15px] mb-[2px] ml-[4px] mr-[3px] flex items-center justify-between">
                  <div className="flex items-center flex-1"><ChevronLeft className="w-[11px] h-[11px] text-[#505050]" strokeWidth={3} /><div className="ml-[3px] w-[94px] h-[15px] bg-[#c8c8c8]" /></div>
                  <ChevronRight className="w-[11px] h-[11px] text-[#505050] mr-[20px]" strokeWidth={3} />
                </div>
              </div>
              <div className="flex-1 border-2 border-[#707070] bg-[#f0f0f0] flex justify-end pr-[1px]">
                <VBar cls="w-[18px]" thumb={<div className="w-full h-[60px] mt-[4px] bg-[#c8c8c8]" />} />
              </div>
            </div>
          </div>
        </div>

        <Panel cls="flex-1 relative">
          <div className="flex items-center h-[26px] shrink-0 mt-[2px]">
            <div className="ml-[10px] w-[180px] h-[5px] border-t border-b border-[#8a8a8a]" />
            <span className="ml-[6px] -mt-[8px] text-[12px] font-bold text-black">x</span>
          </div>
          <div className="ml-[14px] w-[179px] h-[920px] bg-white border-l border-t border-[#a8a8a8] mt-[-6px] pt-[5px] text-[11.500px]">
            <div className="flex items-center ml-[12px] h-[18px]"><div className="w-[10px] border-t border-dotted border-[#777]" />{I.plist}<span className="ml-[4px]">Parts List</span></div>
            <div className="flex items-center ml-[12px] h-[18px]"><div className="w-[10px] border-t border-dotted border-[#777]" /><div className="w-4 h-4 bg-black" /></div>
          </div>
          <div className="flex ml-[10px] h-[22px] text-[11px] tracking-[-0.2px]">
            <div className="w-[60px] h-[22px] flex items-center gap-[6px] pl-[7px] bg-white">{I.parts}<span>Parts</span></div>
            <div className="w-[64px] h-[19px] flex items-center gap-[7px] pl-[5px] border-r border-[#d8d8d8]">{I.wiz}<span>Wizard</span></div>
          </div>
        </Panel>
      </div>

      {/* status */}
      <div className="h-[18px] shrink-0 border-t border-[#a8a8a8] flex items-center">
        <span className="ml-[2px] w-[1585px] pt-[4px]">Draws a circle.</span>
        <span className="w-[61px] pt-[4px] tracking-[-0.2px]">721 : 263</span>
        <div className="h-full w-[68px] border-l border-[#d0d0d0] pl-[7px] pt-[4px] flex items-center tracking-[-0.2px]">Z: 100%</div>
        <div className="h-full w-[68px] border-l border-[#d0d0d0]" />
        <div className="h-full w-[68px] border-l border-[#d0d0d0]" />
        <div className="h-full w-[68px] border-l border-[#d0d0d0]" />
      </div>
      <div className="h-[2px] bg-[#4a5562] shrink-0" />

      {/* Switch dialog */}
      <div className="absolute left-[914px] top-[74px] w-[465px] h-[703px] flex flex-col bg-[#f0f0f0] shadow-[0_4px_14px_rgba(0,0,0,0.35)] text-[11px] tracking-[-0.25px]">
        <div className="h-[31px] bg-[#525e6c] flex items-center justify-between pl-[8px] text-[#f0f2f4] shrink-0 text-[12px]">
          <span>Switch</span>
          <div className="w-[20px] h-[19px] mt-[4px] bg-[#c8474f] flex items-center justify-center text-white font-bold text-[11px]">x</div>
        </div>
        <div className="flex h-[18px] ml-[16px] mt-[18px] w-[431px] text-[#111] border-t border-[#d8d8d8] pt-[1px] shrink-0">
          {[['w-[122px] pr-[2px]', 'Detail'], ['w-[162px]', 'Display Setting'], ['w-[147px]', 'Coordinates']].map(([w, t]) => <div key={t} className={`${w} flex items-center justify-center border-l border-r border-[#d8d8d8]`}>{t}</div>)}
        </div>
        <div className="relative z-10 flex h-[21px] ml-[14px] -mt-[2px] -mb-px text-[#111] shrink-0">
          <div className="w-[74px] h-full bg-white flex items-center pl-[19px] pb-[2px] border-t border-l border-r border-[#d8d8d8]">Main</div>
          <div className="flex h-[18px] mt-[2px] pt-px bg-[#f0f0f0] border-t border-b border-[#d8d8d8]">
            {[['w-[70px] pr-[10px]', 'Text'], ['w-[80px]', 'Interlock'], ['w-[71px]', 'Macro'], ['w-[69px] pr-[6px]', 'Style'], ['w-[69px]', 'Delay']].map(([w, t]) => <div key={t} className={`${w} flex items-center justify-center border-r border-[#d8d8d8]`}>{t}</div>)}
          </div>
        </div>
        <div className="ml-[14px] w-[434px] h-[603px] bg-white border border-[#d8d8d8] pl-[11px] pt-[9px]">
          <div className="flex items-center h-[13px]">
            <div className="w-[165px] flex items-center gap-[2px]"><CB /><span>Output Memory</span></div>
            <div className="flex items-center gap-[3px] text-[#8a8a8a]"><CB disabled /><span>Multi-output</span></div>
          </div>
          <MemRow mt="mt-[8px]" />
          <div className="flex items-center h-[21px] mt-[10px] ml-[21px]"><span className="w-[79px] text-[#9a9a9a]">Output Action</span><DSelect w="w-[129px]" t="Momentary" /></div>
          <div className="flex items-center h-[13px] mt-[5px] gap-[3px]"><CB /><span>Lamp Memory</span></div>
          <MemRow mt="mt-[8px]" />
          <RadRow mt="mt-[11px]" label="Memory Designation" a="Bit" b="Word" aOn />
          <RadRow mt="mt-[10px]" label="Input Type" a="BCD" b="DEC" />
          <div className="flex items-center h-[16px] mt-[14px] gap-[2px] text-[#8a8a8a]"><CB checked disabled /><span>Connect Output Memory and Lamp Memory</span></div>
          <div className="w-[254px] h-px bg-[#8a8a8a] mt-[10px]" />
          <div className="ml-[10px] mt-[7px] h-[13px] text-[#111]">Function</div>
          <div className="ml-[7px] mt-[2px]"><DSelect w="w-[191px]" t="Standard" dark /></div>
          <div className="ml-[7px] mt-[5px] w-[215px] h-[81px] border border-[#707070] flex text-[#111]">
            <div className="flex-1 pl-px pt-px overflow-hidden">
              <div className="h-[13px] bg-[#0078d7] text-white flex items-center pl-[2px]">No Function</div>
              {['Screen', 'Overlap Display', 'Multi-Overlap Display', 'Hard Copy', 'Word Operation'].map(t => <div key={t} className="h-[13px] flex items-center pl-[2px]">{t}</div>)}
            </div>
            <VBar cls="w-[17px] shrink-0" thumb={<div className="w-full h-[17px] mt-[3px] bg-[#c8c8c8]" />} />
          </div>
        </div>
      </div>

      {/* Item List */}
      <div className="absolute left-[1394px] top-[140px] w-[496px] h-[695px] flex flex-col bg-[#f0f0f0] shadow-[4px_6px_14px_rgba(0,0,0,0.35)] text-[11px] tracking-[-0.25px]">
        <div className="h-[31px] bg-[#525e6c] flex items-center justify-between pl-[8px] text-[#f0f2f4] shrink-0 text-[12px]">
          <span>Item List</span>
          <div className="w-[20px] h-[19px] mt-[4px] bg-[#c8474f] flex items-center justify-center text-white font-bold text-[11px]">x</div>
        </div>
        <div className="h-[35px] flex items-center pl-[12px] pt-[3px] shrink-0">
          <Slot i={I.doc} /><Slot i={I.print} /><Slot i={I.chk} />
          <div className="w-[9px]" />
          <div className="w-[23px] h-[22px] flex items-center justify-center bg-[#cce4f7] border border-[#99c8ec]">{I.sort}</div>
          <Slot i={I.wave} /><Slot i={I.fs} w="w-[22px]" /><Slot i={I.gs} w="w-[22px]" /><div className="w-[8px]" /><Slot i={I.pg} />
        </div>
        <div className="ml-[7px] w-[482px] h-[600px] border border-[#d8d8d8] p-[3px] pt-[2px] shrink-0">
          <div className="h-full border border-[#707070] flex flex-col">
            <div className="h-[17px] flex bg-[#f0f0f0] border-b border-[#707070] shrink-0">
              <Cell w="w-[120px]" t="Item" /><Cell w="w-[101px]" t="Coordinates" /><Cell w="w-[101px]" t="Text" /><Cell w="w-[102px]" t="Memory" /><Cell w="w-[50px]" t="Function" cls="border-r-0" />
            </div>
            <div className="h-[18px] flex bg-[#0078d7] text-white border-b border-black shrink-0">
              <div className="w-[120px] h-full flex items-center gap-[2px] bg-[#f58a32] text-[#5a2a00] border border-dotted border-white pl-[1px] shrink-0">{I.switch}<span>Switch</span></div>
              <Cell w="w-[101px]" t="( 88, 76)-( 61, 37)" cls="pl-[2px] border-[#c8c8c8]" /><Cell w="w-[101px]" t="[] [] [] []" cls="text-[9px] tracking-[0.4px] border-[#c8c8c8]" /><Cell w="w-[102px]" t="" cls="border-[#c8c8c8]" /><Cell w="w-[50px]" t="No Function" cls="border-r-0 pl-[2px]" />
            </div>
            <div className="flex-1 bg-[#808080]" />
            <div className="h-[16px] flex items-center bg-[#f0f0f0] border-t border-white shrink-0 px-[3px]">
              <ChevronLeft className="w-[11px] h-[11px] text-[#505050]" strokeWidth={3} />
              <div className="ml-[3px] w-[382px] h-[15px] bg-[#c8c8c8]" />
              <ChevronRight className="ml-auto w-[11px] h-[11px] text-[#505050]" strokeWidth={3} />
            </div>
          </div>
        </div>
        <div className="flex ml-[7px] h-[21px] -mt-[1px] text-[#111] pt-[1px]">
          <div className="w-[44px] h-[21px] bg-white flex items-center pl-[7px]">Base</div>
          {[['w-[56px]', 'Overlap 0'], ['w-[58px]', 'Overlap 1'], ['w-[57px] pl-[3px]', 'Overlap 2']].map(([w, t]) => <div key={t} className={`${w} h-[18px] flex items-center justify-center border-r border-[#d8d8d8]`}>{t}</div>)}
        </div>
      </div>
    </div>
  );
}
